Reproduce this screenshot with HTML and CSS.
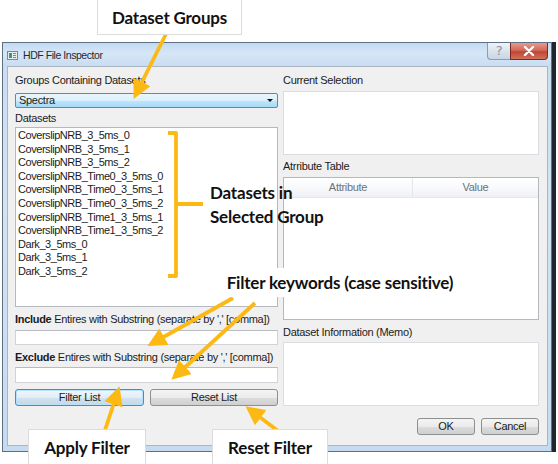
FILE: index.html
```html
<!DOCTYPE html>
<html>
<head>
<meta charset="utf-8">
<title>HDF File Inspector</title>
<link rel="stylesheet" href="styles.css">
</head>
<body>
<div class="stage">
  <div class="window">
    <div class="titlebar">
      <svg class="app-icon" width="11" height="9" viewBox="0 0 11 9">
        <rect x="0.5" y="0.5" width="10" height="8" fill="#e8edf2" stroke="#7a8796"/>
        <rect x="2" y="2" width="3" height="5" fill="#3f9a6a"/>
        <rect x="6" y="2" width="3" height="1" fill="#7a8796"/>
        <rect x="6" y="4" width="3" height="1" fill="#7a8796"/>
        <rect x="6" y="6" width="3" height="1" fill="#7a8796"/>
      </svg>
      <span class="title">HDF File Inspector</span>
      <div class="caption-btns">
        <div class="cap-help">?</div>
        <div class="cap-close">
          <svg width="12" height="10" viewBox="0 0 12 10"><path d="M2 1 L10 9 M10 1 L2 9" stroke="#fff" stroke-width="2.4" stroke-linecap="round"/></svg>
        </div>
      </div>
    </div>
    <div class="client">
      <div class="col col-left">
        <div class="label l-groups">Groups Containing Datasets</div>
        <div class="combo"><span>Spectra</span><span class="combo-arrow"></span></div>
        <div class="label l-datasets">Datasets</div>
        <ul class="listbox">
          <li>CoverslipNRB_3_5ms_0</li>
          <li>CoverslipNRB_3_5ms_1</li>
          <li>CoverslipNRB_3_5ms_2</li>
          <li>CoverslipNRB_Time0_3_5ms_0</li>
          <li>CoverslipNRB_Time0_3_5ms_1</li>
          <li>CoverslipNRB_Time0_3_5ms_2</li>
          <li>CoverslipNRB_Time1_3_5ms_1</li>
          <li>CoverslipNRB_Time1_3_5ms_2</li>
          <li>Dark_3_5ms_0</li>
          <li>Dark_3_5ms_1</li>
          <li>Dark_3_5ms_2</li>
        </ul>
        <div class="label l-include"><b>Include</b> Entires with Substring (separate by ',' [comma])</div>
        <div class="field f-include"></div>
        <div class="label l-exclude"><b>Exclude</b> Entires with Substring (separate by ',' [comma])</div>
        <div class="field f-exclude"></div>
        <div class="btn-row">
          <div class="btn btn-focus">Filter List</div>
          <div class="btn">Reset List</div>
        </div>
      </div>
      <div class="col col-right">
        <div class="label l-current">Current Selection</div>
        <div class="box box-sel"></div>
        <div class="label l-attr">Atrribute Table</div>
        <div class="table">
          <div class="thead"><div class="th">Attribute</div><div class="th">Value</div></div>
        </div>
        <div class="label l-memo">Dataset Information (Memo)</div>
        <div class="box box-memo"></div>
        <div class="dlg-btns">
          <div class="btn btn-dlg">OK</div>
          <div class="btn btn-dlg">Cancel</div>
        </div>
      </div>
    </div>
  </div>

  <svg class="arrows" width="558" height="464" viewBox="0 0 558 464">
    <defs>
      <marker id="head" markerWidth="5" markerHeight="5" refX="1.2" refY="2.5" orient="auto" markerUnits="strokeWidth">
        <path d="M0 0 L5 2.5 L0 5 Z" fill="#fdb913"/>
      </marker>
    </defs>
    <g stroke="#fdb913" stroke-width="3.8" fill="none">
      <line x1="166" y1="34" x2="140" y2="86" marker-end="url(#head)"/>
      <path d="M168 133 H176 V276 H168 M176 204 H203" stroke-linejoin="round"/>
      <line x1="233" y1="298" x2="160" y2="339" marker-end="url(#head)"/>
      <line x1="255" y1="303" x2="182" y2="370" marker-end="url(#head)"/>
      <line x1="103" y1="436" x2="115" y2="400" marker-end="url(#head)"/>
      <line x1="286" y1="437" x2="257" y2="415" marker-end="url(#head)"/>
    </g>
  </svg>

  <div class="note note-groups">Dataset Groups</div>
  <div class="note-free note-datasets">Datasets in<br>Selected Group</div>
  <div class="note note-filter">Filter keywords (case sensitive)</div>
  <div class="note note-apply">Apply Filter</div>
  <div class="note note-reset">Reset Filter</div>
</div>
</body>
</html>
```

FILE: styles.css
```css
* { box-sizing: border-box; }
html, body { margin: 0; padding: 0; background: #fff; }
body { width: 558px; height: 464px; overflow: hidden; }

.stage {
  position: relative;
  width: 558px;
  height: 464px;
  padding: 42px 0 0 2px;
  font-family: "Liberation Sans", Arial, sans-serif;
  font-size: 11px;
  letter-spacing: -0.3px;
  color: #1b1b1b;
}

/* window frame */
.window {
  width: 550px;
  height: 410px;
  border: 1px solid #5d6f84;
  background: linear-gradient(180deg, #c9dcf1 0%, #d3e3f4 40%, #c6daf0 100%);
  padding: 0 3px 5px 4px;
  box-shadow: 4px 0 0 #20262e;
  display: flex;
  flex-direction: column;
}

.titlebar {
  height: 23px;
  display: flex;
  align-items: flex-start;
  background: linear-gradient(180deg, #c4daf1 0%, #d6e6f6 45%, #c9dcf1 100%);
  margin: 0 -3px 0 -4px;
  padding-left: 4px;
}
.app-icon { margin-top: 8px; flex: none; }
.title {
  margin-left: 5px;
  margin-top: 6px;
  font-size: 10.5px;
  letter-spacing: -0.45px;
  color: #1e2a36;
  line-height: 12px;
}
.caption-btns {
  margin-left: auto;
  margin-right: 3px;
  display: flex;
  height: 17px;
}
.cap-help {
  width: 23px;
  height: 17px;
  border: 1px solid #8c9cad;
  border-top: none;
  border-right: none;
  border-radius: 0 0 0 4px;
  background: linear-gradient(180deg, #eef3f8 0%, #dae3ed 50%, #c9d6e4 100%);
  color: #8a949e;
  font-size: 13px;
  line-height: 15px;
  text-align: center;
  font-family: "DejaVu Sans", sans-serif;
}
.cap-close {
  width: 38px;
  height: 17px;
  border: 1px solid #7a2a22;
  border-top: none;
  border-radius: 0 0 4px 0;
  background: linear-gradient(180deg, #e69a8c 0%, #d26a58 45%, #c04632 55%, #d0705c 100%);
  display: flex;
  align-items: center;
  justify-content: center;
}

/* client area */
.client {
  flex: 1;
  background: #f0f0f0;
  border: 1px solid #aab6c4;
  display: grid;
  grid-template-columns: 263px 256px;
  column-gap: 5px;
  padding: 0 0 0 7px;
}
.col { display: flex; flex-direction: column; }

.label { height: 14px; line-height: 14px; white-space: nowrap; }
.label b { font-weight: bold; }

.l-groups { margin-top: 6px; }
.combo {
  margin-top: 6px;
  height: 15px;
  border: 1px solid #4b8fc7;
  border-radius: 2px;
  background: linear-gradient(180deg, #eaf6fd 0%, #d9f0fc 50%, #bee6fd 51%, #a7d9f5 100%);
  display: flex;
  align-items: center;
  padding: 0 4px 0 3px;
  line-height: 13px;
}
.combo-arrow {
  margin-left: auto;
  width: 0; height: 0;
  border-left: 3px solid transparent;
  border-right: 3px solid transparent;
  border-top: 3px solid #111;
}
.l-datasets { margin-top: 3px; }
.listbox {
  margin: 2px 0 0 0;
  height: 180px;
  border: 1px solid #b5b9bf;
  background: #fff;
  list-style: none;
  padding: 1px 0 0 2px;
  letter-spacing: -0.45px;
}
.listbox li { height: 13.6px; line-height: 13.6px; white-space: nowrap; }

.l-include { margin-top: 5px; }
.field {
  height: 15px;
  border: 1px solid #d0d3d8;
  border-top-color: #b8bcc2;
  background: #fff;
}
.f-include { margin-top: 4px; }
.l-exclude { margin-top: 5px; }
.f-exclude { margin-top: 3px; height: 16px; }

.btn-row {
  margin-top: 6px;
  display: grid;
  grid-template-columns: 129px 128px;
  column-gap: 6px;
}
.btn {
  height: 17px;
  border: 1px solid #8e8f8f;
  border-radius: 3px;
  background: linear-gradient(180deg, #f4f4f4 0%, #ebebeb 50%, #dddddd 51%, #cfcfcf 100%);
  text-align: center;
  line-height: 15px;
  color: #1b1b1b;
}
.btn-focus {
  border-color: #3c8ed6;
  box-shadow: inset 0 0 0 1px #b8e0f8;
  background: linear-gradient(180deg, #eef6fb 0%, #e2eef6 50%, #d2e2ee 51%, #c6d8e6 100%);
}

/* right column */
.l-current { margin-top: 6px; }
.box {
  background: #fff;
  border: 1px solid #dadde2;
}
.box-sel { margin-top: 4px; height: 64px; }
.l-attr { margin-top: 4px; }
.table {
  margin-top: 4px;
  height: 143px;
  border: 1px solid #b5b9bf;
  background: #fff;
}
.thead {
  height: 20px;
  display: grid;
  grid-template-columns: 128px 1fr;
  background: linear-gradient(180deg, #ffffff 0%, #f7f8fa 60%, #eef0f3 100%);
  border-bottom: 1px solid #e3e6ea;
}
.th {
  text-align: center;
  line-height: 19px;
  color: #6a717a;
}
.th + .th { border-left: 1px solid #e3e6ea; }
.l-memo { margin-top: 5px; }
.box-memo { margin-top: 3px; height: 64px; }
.dlg-btns {
  margin-top: 12px;
  display: flex;
  justify-content: flex-end;
  gap: 6px;
}
.btn-dlg { width: 58px; }

/* annotations */
.arrows { position: absolute; left: 0; top: 0; pointer-events: none; }
.note, .note-free {
  position: absolute;
  font-family: Lato, "Open Sans", sans-serif;
  font-weight: 700;
  font-size: 17px;
  letter-spacing: -0.2px;
  color: #111;
  white-space: nowrap;
}
.note {
  background: #fff;
  border: 1px solid #dcdcdc;
  display: flex;
  align-items: center;
  justify-content: center;
}
.note-groups { left: 97px; top: -1px; width: 145px; height: 36px; }
.note-datasets { left: 210px; top: 181px; line-height: 24px; }
.note-filter { left: 209px; top: 268px; width: 262px; height: 29px; border-color: #fff; }
.note-apply { left: 28px; top: 429px; width: 118px; height: 40px; padding-bottom: 4px; }
.note-reset { left: 212px; top: 429px; width: 116px; height: 40px; padding-bottom: 4px; }
```
